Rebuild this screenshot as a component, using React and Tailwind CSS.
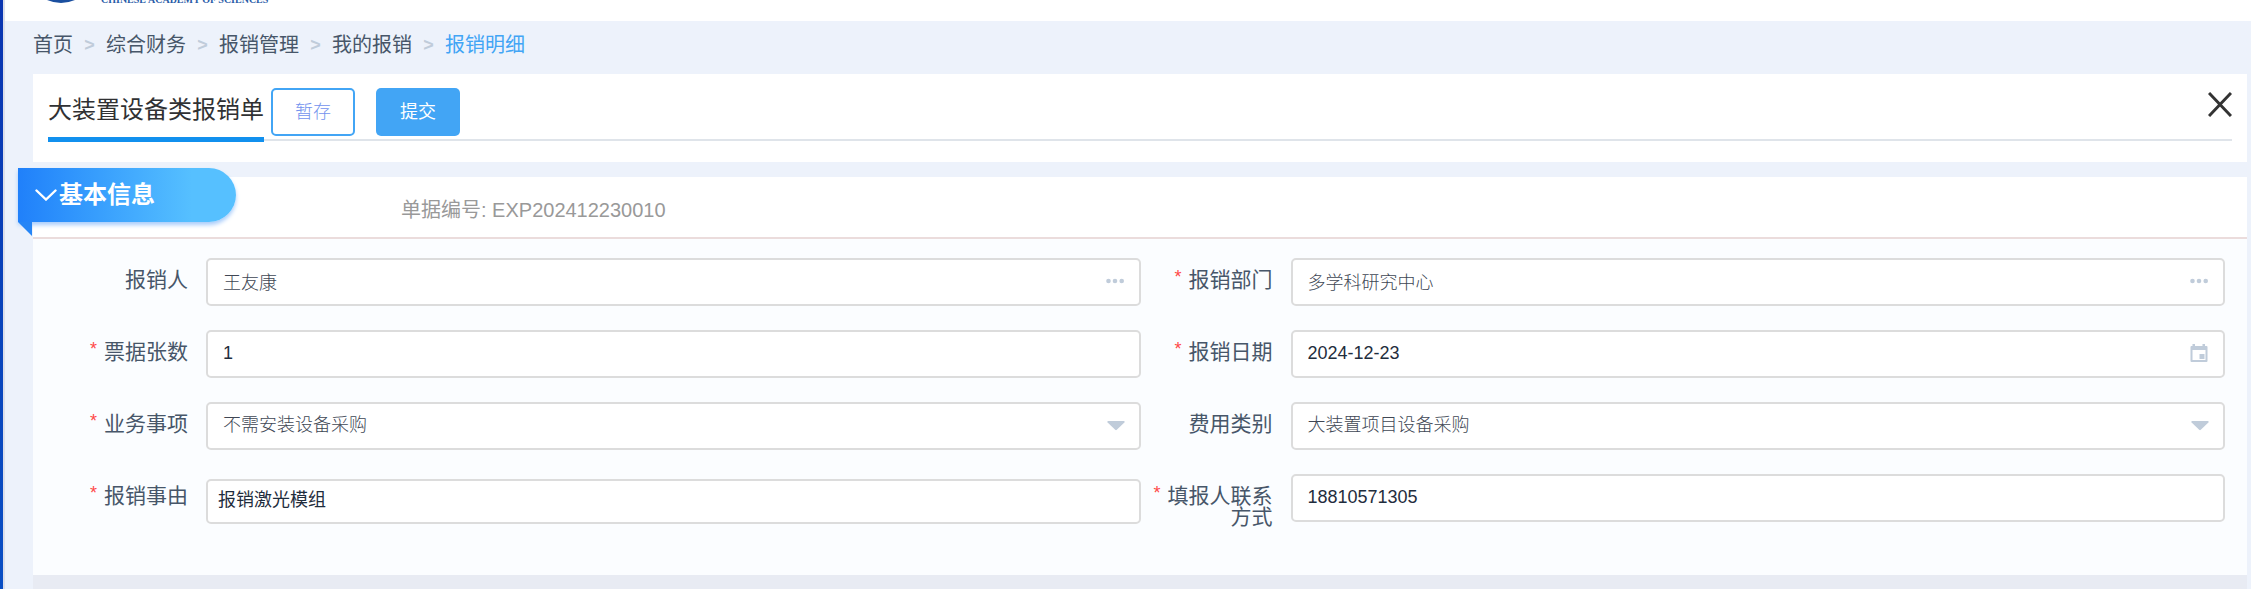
import React from "react";

const FONT = "font-['Liberation_Sans','Noto_Sans_CJK_SC',sans-serif]";
const BOX =
  "w-full h-12 rounded-[5px] border-2 border-[#dcdcdc] bg-white px-[15px] pb-0.5 text-[18px] outline-none appearance-none";

function Dots() {
  return (
    <svg width="18" height="6" viewBox="0 0 18 6" fill="#c0ccda">
      <circle cx="2.5" cy="3" r="2.3" />
      <circle cx="9" cy="3" r="2.3" />
      <circle cx="15.7" cy="3" r="2.3" />
    </svg>
  );
}

function Caret() {
  return (
    <svg width="18" height="10" viewBox="0 0 18 10" fill="#c0ccda">
      <path d="M1 0h16q1.2.6.4 1.6L9.8 8.8q-.8.7-1.6 0L.6 1.6Q-.2.6 1 0z" />
    </svg>
  );
}

function CalendarIcon() {
  return (
    <svg width="18" height="18" viewBox="0 0 18 18" fill="#c0ccda">
      <path fillRule="evenodd" d="M2.5 0h2.5v2h7.5V0H15v2h1.500q1 0 1 1v14q0 1-1 1h-15q-1 0-1-1V3q0-1 1-1h1zM2.500 6v10h13V6z" />
      <path d="M9.500 10h5v5h-5z" />
    </svg>
  );
}

function Field({ id, label, required, children }) {
  return (
    <div className="flex h-12 items-start">
      <label htmlFor={id} className="w-[150px] shrink-0 pt-[11px] pr-[18px] text-right text-[21px] leading-[21px] text-[#475669]">
        {required && <span className="mr-[7px] align-[4px] text-[18px] leading-[10px] text-[#ff4949]">*</span>}
        {label}
      </label>
      <div className="relative min-w-0 flex-1">{children}</div>
    </div>
  );
}

function Lookup({ id, value, name, icon, className }) {
  return (
    <>
      <input id={id} defaultValue={value} className={`${BOX} ${className}`} />
      <button type="button" aria-label={name} className="absolute top-0 right-[17px] flex h-12 items-center pb-0.5">
        {icon}
      </button>
    </>
  );
}

function Choice({ id, value }) {
  return (
    <>
      <select id={id} className={`${BOX} font-light text-[#404754]`}>
        <option>{value}</option>
      </select>
      <span className="pointer-events-none absolute top-0 right-4 flex h-12 items-center">
        <Caret />
      </span>
    </>
  );
}

const crumbs = ["首页", "综合财务", "报销管理", "我的报销"];

export default function App() {
  return (
    <div className={`flex min-h-screen bg-[#edf2fb] ${FONT}`}>
      <div className="w-[5px] shrink-0 border-r-2 border-[#dcdfea] bg-linear-to-b from-[#0a35b0] to-[#0a4fc4]" />
      <div className="flex min-w-0 flex-1 flex-col">
        <header className="flex h-[21px] items-start gap-[25px] overflow-hidden bg-white pl-[41px]">
          <svg width="30" height="3" viewBox="0 0 30 3">
            <path d="M1 0Q15 6 29 0z" fill="#1a4f9f" />
          </svg>
          <span className="-mt-2 font-['Liberation_Serif',serif] text-[10px] leading-4 font-bold text-[#2a5ca8]">CHINESE ACADEMY OF SCIENCES</span>
        </header>

        <nav className="flex h-[53px] items-center pb-1.5 pl-7 text-[20px] leading-6 text-[#475669]">
          {crumbs.map((c) => (
            <React.Fragment key={c}>
              <a href="#">{c}</a>
              <span className="w-[33px] text-center text-[18px] font-bold text-[#c0ccda]">&gt;</span>
            </React.Fragment>
          ))}
          <a href="#" className="text-[#42a5f5]">报销明细</a>
        </nav>

        <main className="flex flex-1 flex-col pr-1 pl-7">
          <section className="h-[88px] bg-white px-[15px] pt-3.5">
            <div className="flex h-[54px] items-start">
              <h1 className="h-[54px] border-b-5 border-[#1190ee] pt-1.5 text-[24px] leading-8 text-[#303133]">大装置设备类报销单</h1>
              <div className="flex h-[53px] flex-1 items-start border-b-2 border-[#dfe4ea] pl-[7px]">
                <button type="button" className="h-12 w-[84px] rounded-[5px] border-2 border-[#42a5f5] bg-white text-[18px] font-light text-[#7393ee]">暂存</button>
                <button type="button" className="ml-[21px] h-12 w-[84px] rounded-[5px] bg-[#42a5f5] text-[18px] text-white">提交</button>
                <button type="button" aria-label="关闭" className="mt-1 ml-auto">
                  <svg width="24" height="25" viewBox="0 0 24 25" fill="none" stroke="#333" strokeWidth="3">
                    <path d="M1 1l22 23M23 1L1 24" />
                  </svg>
                </button>
              </div>
            </div>
          </section>

          <section className="mt-[15px] flex flex-1 flex-col">
            <div className="relative flex h-[62px] items-center border-b-2 border-[#ebdcdc] bg-white pt-1.5 pl-[368px]">
              <button type="button" className="absolute -top-[9px] -left-[15px] flex h-[54px] w-[218px] items-center gap-0.5 rounded-r-full bg-linear-to-r from-[#2080fa] to-[#56c0ff] to-80% pl-[17px] text-[24px] leading-none font-bold text-white shadow-[0_3px_4px_#a9cdfb]">
                <svg width="22" height="12" viewBox="0 0 22 12" fill="none" stroke="#fff" strokeWidth="2.4" strokeLinecap="round">
                  <path d="M1.500 1.500l9.500 9l9.500-9" />
                </svg>
                基本信息
                <svg className="absolute top-[54px] left-0" width="14" height="14" viewBox="0 0 14 14">
                  <path d="M0 0h14v14z" fill="#2585f6" />
                </svg>
              </button>
              <span className="text-[20px] leading-6 text-[#999]">单据编号: EXP202412230010</span>
            </div>

            <form className="grid h-[336px] grid-cols-2 content-start gap-y-6 bg-[#fbfdff] pt-[19px] pr-[22px] pl-[23px]">
              <Field id="person" label="报销人">
                <Lookup id="person" value="王友康" name="选择报销人" icon={<Dots />} className="font-light text-[#404754]" />
              </Field>
              <Field id="dept" label="报销部门" required>
                <Lookup id="dept" value="多学科研究中心" name="选择报销部门" icon={<Dots />} className="font-light text-[#404754]" />
              </Field>
              <Field id="count" label="票据张数" required>
                <input id="count" defaultValue="1" className={`${BOX} text-[#1f2d3d]`} />
              </Field>
              <Field id="date" label="报销日期" required>
                <Lookup id="date" value="2024-12-23" name="选择日期" icon={<CalendarIcon />} className="text-[#1f2d3d]" />
              </Field>
              <Field id="item" label="业务事项" required>
                <Choice id="item" value="不需安装设备采购" />
              </Field>
              <Field id="type" label="费用类别">
                <Choice id="type" value="大装置项目设备采购" />
              </Field>
              <Field id="reason" label="报销事由" required>
                <textarea id="reason" rows={1} defaultValue="报销激光模组" className="mt-[5px] block h-[45px] w-full resize-none overflow-hidden rounded-[5px] border-2 border-[#dcdcdc] bg-white px-2.5 py-1.5 text-[18px] leading-[27px] text-[#1f2d3d] outline-none" />
              </Field>
              <Field id="phone" label="填报人联系方式" required>
                <input id="phone" type="tel" defaultValue="18810571305" className={`${BOX} text-[#1f2d3d]`} />
              </Field>
            </form>
            <div className="min-h-3 flex-1 bg-[#e8ebf3]" />
          </section>
        </main>
      </div>
    </div>
  );
}
